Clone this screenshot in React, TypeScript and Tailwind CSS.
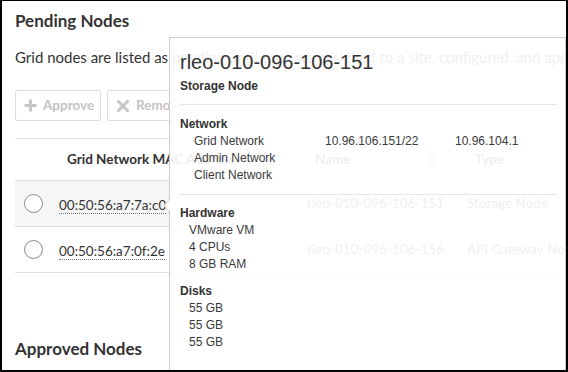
import React from "react";

const SortIcon = () => (
  <svg width="10" height="12" viewBox="0 0 10 12" className="inline-block">
    <path d="M3 1v9.5M1 8.3l2 2.4 2-2.4" stroke="#5b9fc4" fill="none" strokeWidth="1.2" />
    <path d="M7 11V1.5M5 3.7l2-2.4 2 2.4" stroke="#5b9fc4" fill="none" strokeWidth="1.2" />
  </svg>
);

const PlusIcon = () => (
  <svg width="13" height="13" viewBox="0 0 13 13">
    <path d="M6.5 0.5v12M0.5 6.5h12" stroke="#c6c6c6" strokeWidth="3" />
  </svg>
);

const XIcon = () => (
  <svg width="12" height="12" viewBox="0 0 12 12">
    <path d="M1.5 1.5l9 9M10.5 1.5l-9 9" stroke="#c6c6c6" strokeWidth="3" strokeLinecap="round" />
  </svg>
);

function Row({ mac, name, type, shaded }: { mac: string; name: string; type: string; shaded?: boolean }) {
  return (
    <div className={shaded ? "flex h-[46px] items-center border-b border-[#dddddd] bg-[#f6f6f6]" : "flex h-[46px] items-center border-b border-[#dddddd]"}>
      <div className="flex w-[36px] shrink-0 justify-center">
        <div className="h-[19px] w-[19px] rounded-full border border-[#8a8a8a] bg-white" />
      </div>
      <div className="w-[248px] shrink-0 pl-[8px]">
        <span className="border-b border-dotted border-[#777] text-[13.5px] leading-[20px]">{mac}</span>
      </div>
      <div className="w-[160px] shrink-0 pl-[8px] text-[13.5px] whitespace-nowrap">{name}</div>
      <div className="pl-[8px] text-[13.5px] whitespace-nowrap">{type}</div>
    </div>
  );
}

export default function App() {
  return (
    <div className="relative h-[372px] w-[568px] overflow-hidden border-t border-r-2 border-b-2 border-l-2 border-black bg-white font-['Lato',sans-serif] text-[#333]">
      <div className="pt-[8px] pl-[13px]">
        <h2 className="text-[17px] leading-[24px] font-bold">Pending Nodes</h2>
        <p className="mt-[14px] text-[15px] leading-[20px] whitespace-nowrap">
          Grid nodes are listed as pending until they are assigned to a site, configured, and approved.
        </p>
        <div className="mt-[23px] flex gap-[6px]">
          <div className="flex h-[31px] w-[86px] items-center gap-[6px] rounded-[2px] border border-[#dcdcdc] pl-[8px] text-[13.5px] font-bold text-[#c4c4c4]">
            <PlusIcon />
            <span>Approve</span>
          </div>
          <div className="flex h-[31px] w-[92px] items-center gap-[7px] rounded-[2px] border border-[#dcdcdc] pl-[9px] text-[13.5px] font-bold text-[#c4c4c4]">
            <XIcon />
            <span>Remove</span>
          </div>
        </div>
        <div className="mt-[17px] border-t border-[#dddddd]">
          <div className="flex h-[42px] items-center border-b border-[#dddddd] text-[13.5px] font-bold">
            <div className="w-[36px] shrink-0" />
            <div className="flex w-[248px] shrink-0 items-center pl-[16px]">
              <span className="w-[200px]">Grid Network MAC Address</span>
              <SortIcon />
            </div>
            <div className="flex w-[160px] shrink-0 items-center pl-[16px]">
              <span className="w-[112px]">Name</span>
              <SortIcon />
            </div>
            <div className="pl-[16px]">Type</div>
          </div>
          <Row shaded mac="00:50:56:a7:7a:c0" name="rleo-010-096-106-151" type="Storage Node" />
          <Row mac="00:50:56:a7:0f:2e" name="rleo-010-096-106-156" type="API Gateway Node" />
        </div>
        <h2 className="mt-[64px] text-[17px] leading-[24px] font-bold">Approved Nodes</h2>
      </div>

      <div className="absolute top-[36px] right-0 left-[167px] h-[360px] border border-[#cccccc] bg-white/[0.92] pt-[13px] pr-[8px] pl-[10px] font-['Liberation_Sans',Arial,sans-serif] text-[#333]">
        <div className="text-[20px] leading-[22px]">rleo-010-096-106-151</div>
        <div className="mt-[5px] text-[12px] leading-[16px] font-bold">Storage Node</div>
        <div className="mt-[10px] h-px bg-[#e5e5e5]" />
        <div className="mt-[11px] text-[12px] leading-[17px]">
          <div className="font-bold">Network</div>
          <div className="grid grid-cols-[131px_130px_1fr] pl-[14px] text-[#3a3a3a]">
            <span>Grid Network</span>
            <span>10.96.106.151/22</span>
            <span>10.96.104.1</span>
            <span>Admin Network</span>
            <span />
            <span />
            <span>Client Network</span>
            <span />
            <span />
          </div>
        </div>
        <div className="mt-[10px] h-px bg-[#e5e5e5]" />
        <div className="mt-[10px] text-[12px] leading-[17px]">
          <div className="font-bold">Hardware</div>
          <div className="pl-[9px] text-[#3a3a3a]">
            <div>VMware VM</div>
            <div>4 CPUs</div>
            <div>8 GB RAM</div>
          </div>
        </div>
        <div className="mt-[10px] text-[12px] leading-[17px]">
          <div className="font-bold">Disks</div>
          <div className="pl-[9px] text-[#3a3a3a]">
            <div>55 GB</div>
            <div>55 GB</div>
            <div>55 GB</div>
          </div>
        </div>
      </div>

      <svg className="absolute top-[197px] left-[161px]" width="9" height="15" viewBox="0 0 9 15">
        <polygon points="9,0 1,7.5 9,15" fill="#ffffff" />
        <polyline points="7,0 1,7.5 7,15" fill="none" stroke="#cccccc" strokeWidth="1" />
      </svg>
    </div>
  );
}
